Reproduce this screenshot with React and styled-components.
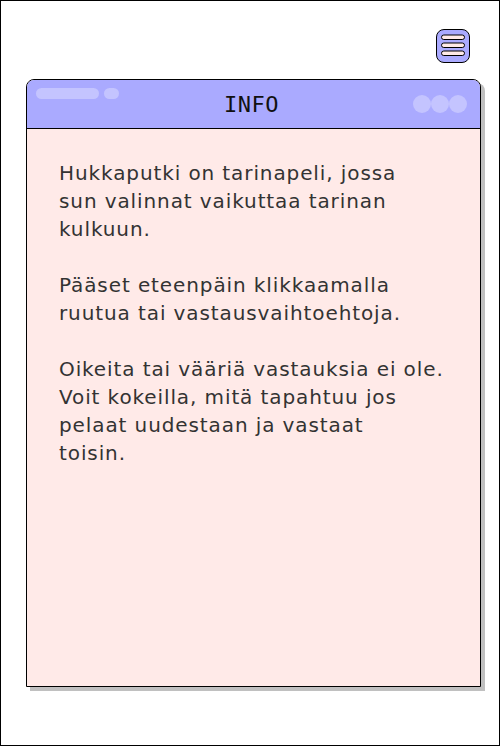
import styled, { createGlobalStyle } from "styled-components";

const GlobalStyle = createGlobalStyle`
  html, body {
    margin: 0;
    padding: 0;
    background: #fff;
  }
  * {
    box-sizing: border-box;
  }
`;

// line breaks follow the original layout
const paragraphs = [
  ["Hukkaputki on tarinapeli, jossa", "sun valinnat vaikuttaa tarinan", "kulkuun."],
  ["Pääset eteenpäin klikkaamalla", "ruutua tai vastausvaihtoehtoja."],
  [
    "Oikeita tai vääriä vastauksia ei ole.",
    "Voit kokeilla, mitä tapahtuu jos",
    "pelaat uudestaan ja vastaat",
    "toisin.",
  ],
];

const MenuIcon = () => (
  <svg width="26" height="24" viewBox="0 0 26 24">
    {[3, 11, 19].map((y) => (
      <rect key={y} x="1.5" y={y - 2} width="23" height="4.5" rx="2.25" fill="#ffeae8" stroke="#000" strokeWidth="1" />
    ))}
  </svg>
);

const App = () => {
  return (
    <>
      <GlobalStyle />
      <Frame>
        <TopBar>
          <MenuButton aria-label="menu">
            <MenuIcon />
          </MenuButton>
        </TopBar>
        <Card>
          <Header>
            <Decor>
              <Pill $w={63} />
              <Pill $w={15} />
            </Decor>
            <Title>INFO</Title>
            <Dots>
              <Dot />
              <Dot />
              <Dot />
            </Dots>
          </Header>
          <Body>
            {paragraphs.map((lines, i) => (
              <Text key={i}>
                {lines.map((line, j) => (
                  <span key={j}>
                    {line}
                    {j < lines.length - 1 && <br />}
                  </span>
                ))}
              </Text>
            ))}
          </Body>
        </Card>
      </Frame>
    </>
  );
};

const Frame = styled.div`
  height: 746px;
  border: 1px solid #000;
  padding: 28px 18px 0 25px;
  display: flex;
  flex-direction: column;
  background: #fff;
`;

const TopBar = styled.div`
  display: flex;
  justify-content: flex-end;
  padding-right: 11px;
  margin-bottom: 16px;
`;

const MenuButton = styled.button`
  width: 34px;
  height: 34px;
  padding: 0;
  border: 1px solid #000;
  border-radius: 8px;
  background: #aaaaff;
  display: flex;
  align-items: center;
  justify-content: center;
  cursor: pointer;
`;

const Card = styled.section`
  height: 608px;
  border: 1px solid #000;
  border-radius: 8px 8px 0 0;
  background: #ffeae8;
  box-shadow: 4px 4px 0 #c0c0c0;
  display: flex;
  flex-direction: column;
  overflow: hidden;
`;

const Header = styled.header`
  height: 49px;
  background: #aaaaff;
  border-bottom: 1px solid #000;
  display: grid;
  grid-template-columns: 1fr auto 1fr;
  align-items: center;
  padding: 0 13px 0 9px;
`;

const Decor = styled.div`
  align-self: start;
  display: flex;
  gap: 5px;
  padding-top: 8px;
`;

const Pill = styled.span`
  width: ${({ $w }) => $w}px;
  height: 11px;
  border-radius: 6px;
  background: #c4c4ff;
`;

const Title = styled.h1`
  margin: 0;
  font-family: "DejaVu Sans Mono", "Liberation Mono", monospace;
  font-size: 22px;
  font-weight: normal;
  letter-spacing: 0.5px;
  color: #111;
`;

const Dots = styled.div`
  justify-self: end;
  display: flex;
  margin-top: -1px;
`;

const Dot = styled.span`
  width: 18px;
  height: 18px;
  border-radius: 50%;
  background: #c4c4ff;
`;

const Body = styled.div`
  padding: 30px 20px 0 32px;
`;

const Text = styled.p`
  margin: 0 0 28px;
  font-family: "DejaVu Sans", "Open Sans", sans-serif;
  font-size: 20px;
  font-weight: normal;
  letter-spacing: 0.9px;
  line-height: 28px;
  color: #333;
  white-space: nowrap;
`;

export default App;
